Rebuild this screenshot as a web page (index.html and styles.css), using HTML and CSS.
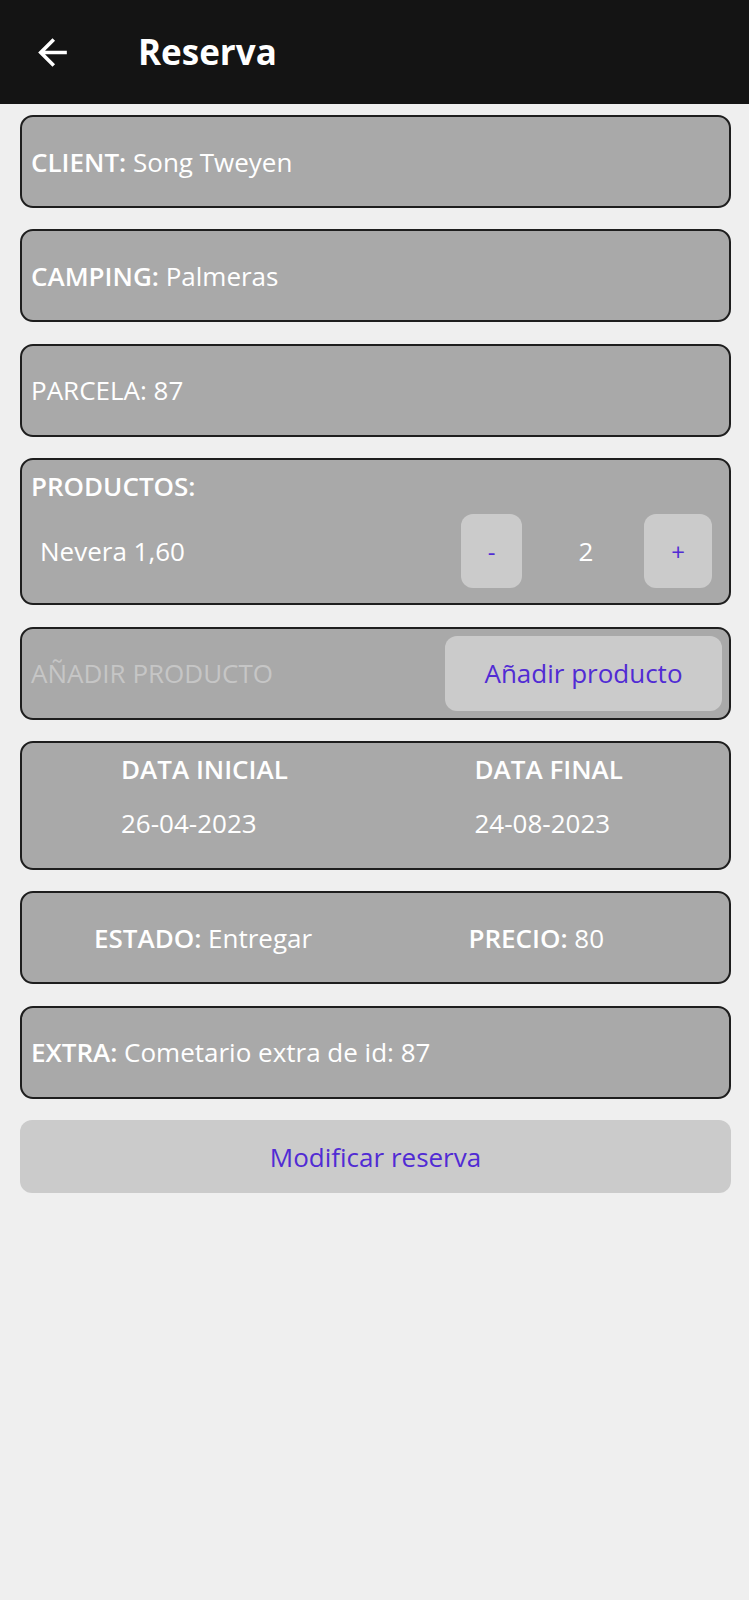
FILE: index.html
```html
<!DOCTYPE html>
<html lang="es">
<head>
<meta charset="utf-8">
<title>Reserva</title>
<link rel="stylesheet" href="styles.css">
</head>
<body>
<header class="topbar">
  <svg class="back" viewBox="0 0 24 24" width="43" height="43" aria-hidden="true">
    <path d="M20 11H7.83l5.59-5.59L12 4l-8 8 8 8 1.41-1.41L7.83 13H20v-2z" fill="#ffffff"/>
  </svg>
  <h1 class="title">Reserva</h1>
</header>
<main class="content">
  <section class="card simple"><span class="text"><b>CLIENT:</b> Song Tweyen</span></section>
  <section class="card simple"><span class="text"><b>CAMPING:</b> Palmeras</span></section>
  <section class="card simple"><span class="text">PARCELA: 87</span></section>
  <section class="card products">
    <div class="text"><b>PRODUCTOS:</b></div>
    <div class="product-row">
      <span class="text product-name">Nevera 1,60</span>
      <button class="btn small minus">-</button>
      <span class="text qty">2</span>
      <button class="btn small plus">+</button>
    </div>
  </section>
  <section class="card add">
    <span class="placeholder">AÑADIR PRODUCTO</span>
    <button class="btn add-btn">Añadir producto</button>
  </section>
  <section class="card dates">
    <div class="date-col">
      <div class="text"><b>DATA INICIAL</b></div>
      <div class="text">26-04-2023</div>
    </div>
    <div class="date-col">
      <div class="text"><b>DATA FINAL</b></div>
      <div class="text">24-08-2023</div>
    </div>
  </section>
  <section class="card status">
    <span class="text st-a"><b>ESTADO:</b> Entregar</span>
    <span class="text st-b"><b>PRECIO:</b> 80</span>
  </section>
  <section class="card simple"><span class="text"><b>EXTRA:</b> Cometario extra de id: 87</span></section>
  <button class="btn modify">Modificar reserva</button>
</main>
</body>
</html>
```
FILE: styles.css
```css
* { box-sizing: border-box; }
html, body {
  margin: 0;
  padding: 0;
  background: #efefef;
  font-family: "Open Sans", "Noto Sans", sans-serif;
}
.topbar {
  height: 104px;
  background: #141414;
  display: flex;
  align-items: center;
  padding-left: 31px;
}
.back { display: block; }
.title {
  margin: 0 0 0 64px;
  color: #ffffff;
  font-size: 35px;
  font-weight: 700;
  line-height: 44px;
}
.content {
  display: flex;
  flex-direction: column;
  gap: 21.4px;
  padding: 11px 18px 0 20px;
}
.card {
  background: #a9a9a9;
  border: 2px solid #1e1e1e;
  border-radius: 13px;
  padding: 0 17px 0 9px;
}
.text {
  color: #ffffff;
  font-size: 26px;
  line-height: 36px;
}
.text b { font-weight: 600; }
.simple {
  height: 93px;
  display: flex;
  align-items: center;
}
.products {
  height: 147px;
  padding-top: 8px;
}
.product-row {
  display: grid;
  grid-template-columns: 1fr 61px 122px 68px;
  align-items: center;
  margin-top: 10px;
  height: 74px;
}
.product-name { padding-left: 9px; }
.qty { text-align: center; padding-left: 6px; }
.btn {
  border: none;
  background: #cbcbcb;
  color: #512bd4;
  font-family: "Open Sans", "Noto Sans", sans-serif;
  font-size: 26px;
  padding: 0;
  cursor: pointer;
}
.small {
  height: 74px;
  border-radius: 12px;
  font-size: 24px;
}
.add {
  height: 93px;
  display: flex;
  align-items: center;
  justify-content: space-between;
  padding: 0 7px 0 9px;
}
.placeholder {
  color: #c6c6c6;
  font-size: 26px;
  line-height: 36px;
}
.add-btn {
  width: 277px;
  height: 75px;
  border-radius: 12px;
}
.dates {
  height: 129px;
  display: grid;
  grid-template-columns: 1fr 1fr;
  padding: 8px 0 0 0;
}
.date-col {
  display: flex;
  flex-direction: column;
  gap: 18px;
  padding-left: 99px;
}
.status {
  height: 93px;
  display: grid;
  grid-template-columns: 1fr 1fr;
  align-items: center;
  padding: 0;
}
.st-a { padding-left: 72px; }
.st-b { padding-left: 93px; }
.modify {
  height: 73px;
  border-radius: 12px;
  width: 100%;
}
```
